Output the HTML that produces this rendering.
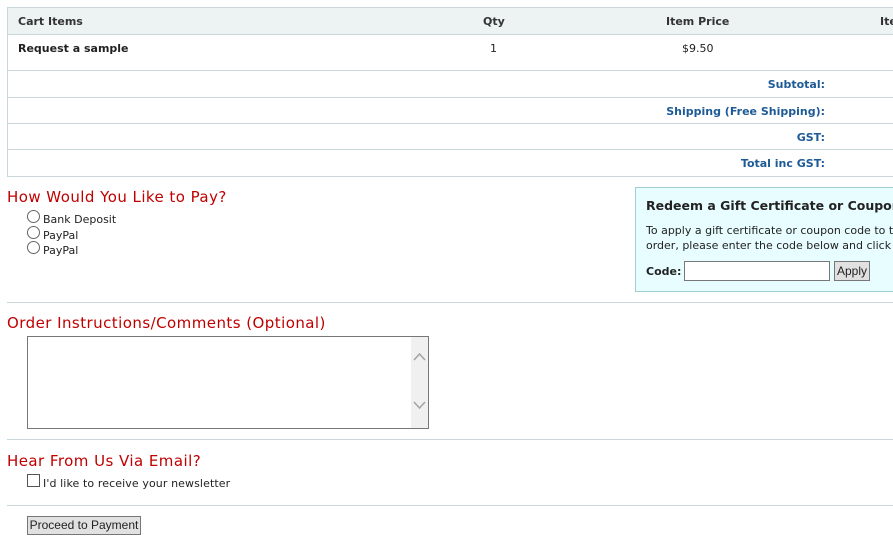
<!DOCTYPE html>
<html><head><style>
body{margin:0;width:893px;height:543px;overflow:hidden;background:#fff;font-family:"DejaVu Sans",Verdana,sans-serif;font-size:11px;color:#222;position:relative}
.a{position:absolute;white-space:nowrap}
.hl{position:absolute;left:7px;width:900px;height:1px;background:#c9d6dc}
.b{font-weight:bold}
.blue{color:#1d5a96;font-weight:bold}
h{position:absolute;color:#c00000;font-size:15px;letter-spacing:0.45px;white-space:nowrap}
.rad{position:absolute;width:11px;height:11px;border:1px solid #666;border-radius:50%;background:#fff}
</style></head><body>
<div class="a" style="left:7px;top:7px;width:900px;height:170px;border:1px solid #c9d6dc;box-sizing:border-box"></div>
<div class="a" style="left:8px;top:8px;width:900px;height:26px;background:#edf2f2"></div>
<div class="hl" style="top:34px"></div>
<div class="hl" style="top:70px"></div>
<div class="hl" style="top:97px"></div>
<div class="hl" style="top:123px"></div>
<div class="hl" style="top:149px"></div>
<div class="a b" style="left:18px;top:15px;color:#333">Cart Items</div>
<div class="a b" style="left:483px;top:15px;color:#333">Qty</div>
<div class="a b" style="left:666px;top:15px;color:#333">Item Price</div>
<div class="a b" style="left:880px;top:15px;color:#333">Item</div>
<div class="a b" style="left:18px;top:42px">Request a sample</div>
<div class="a" style="left:490px;top:42px">1</div>
<div class="a" style="left:682px;top:42px">$9.50</div>
<div class="a blue" style="right:68px;top:78px">Subtotal:</div>
<div class="a blue" style="right:68px;top:105px">Shipping (Free Shipping):</div>
<div class="a blue" style="right:68px;top:131px">GST:</div>
<div class="a blue" style="right:68px;top:157px">Total inc GST:</div>
<h style="left:7px;top:188px">How Would You Like to Pay?</h>
<div class="rad" style="left:27px;top:210px"></div><div class="a" style="left:43px;top:213px">Bank Deposit</div>
<div class="rad" style="left:27px;top:226px"></div><div class="a" style="left:43px;top:229px">PayPal</div>
<div class="rad" style="left:27px;top:241px"></div><div class="a" style="left:43px;top:244px">PayPal</div>
<div class="a" style="left:635px;top:187px;width:300px;height:105px;background:#e8fdff;border:1px solid #9fcfd3;box-sizing:border-box"></div>
<div class="a b" style="left:646px;top:198px;font-size:12.5px">Redeem a Gift Certificate or Coupon</div>
<div class="a" style="left:646px;top:223px;line-height:15px">To apply a gift certificate or coupon code to this<br>order, please enter the code below and click</div>
<div class="a b" style="left:646px;top:265px">Code:</div>
<div class="a" style="left:684px;top:261px;width:146px;height:20px;border:1px solid #777;background:#fff;box-sizing:border-box"></div>
<div class="a" style="left:834px;top:261px;width:36px;height:20px;border:1px solid #777;background:#e1e1e1;box-sizing:border-box;font-family:'Liberation Sans',Arial,sans-serif;font-size:12px;text-align:center;line-height:18px">Apply</div>
<div class="hl" style="top:302px"></div>
<h style="left:7px;top:314px">Order Instructions/Comments (Optional)</h>
<div class="a" style="left:27px;top:336px;width:402px;height:93px;border:1px solid #777;box-sizing:border-box;background:#fff"></div>
<div class="a" style="left:411px;top:337px;width:17px;height:91px;background:#f0f0f0"></div>
<svg class="a" style="left:413px;top:352px" width="13" height="10"><path d="M1 8 L6.5 2 L12 8" stroke="#a3a3a3" fill="none" stroke-width="1.5"/></svg>
<svg class="a" style="left:413px;top:400px" width="13" height="10"><path d="M1 2 L6.5 8 L12 2" stroke="#a3a3a3" fill="none" stroke-width="1.5"/></svg>
<div class="hl" style="top:439px"></div>
<h style="left:7px;top:452px">Hear From Us Via Email?</h>
<div class="a" style="left:27px;top:474px;width:13px;height:13px;border:1px solid #555;box-sizing:border-box;background:#fff"></div>
<div class="a" style="left:43px;top:477px;letter-spacing:0.1px">I'd like to receive your newsletter</div>
<div class="hl" style="top:505px"></div>
<div class="a" style="left:27px;top:516px;width:114px;height:19px;border:1px solid #777;background:#e1e1e1;box-sizing:border-box;font-family:'Liberation Sans',Arial,sans-serif;font-size:12px;text-align:center;line-height:17px">Proceed to Payment</div>
</body></html>
